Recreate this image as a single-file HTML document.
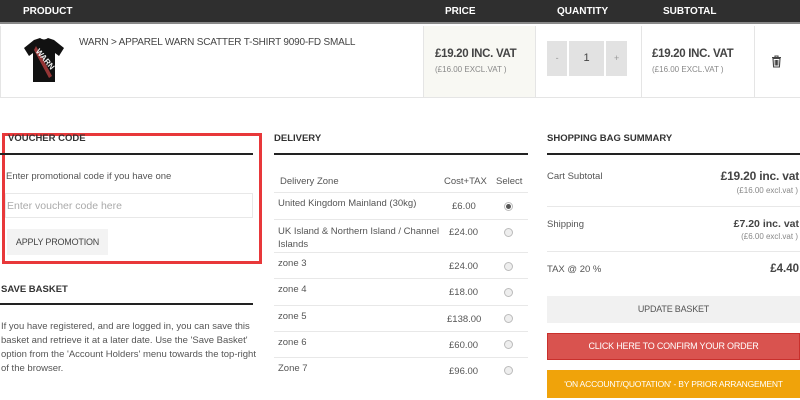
<!DOCTYPE html>
<html><head><style>
*{margin:0;padding:0;box-sizing:border-box}
body{width:800px;height:400px;overflow:hidden;background:#fff;font-family:"Liberation Sans",sans-serif;color:#555;position:relative;font-size:10px}
.a{position:absolute;white-space:nowrap}
.hd{background:#2f2f2f;position:absolute;left:0;top:0;width:800px;height:24px;border-bottom:2px solid #888}
.hd span{position:absolute;top:6px;color:#fff;font-size:10px;font-weight:bold}
.h{position:absolute;font-weight:bold;color:#333;font-size:9.5px}
.ln{position:absolute;height:2px;background:#222}
.sep{position:absolute;height:1px;background:#e8e8e8}
.r{width:9px;height:9px;border-radius:50%;border:1px solid #bbb;background:#eee;position:absolute}
.btn{position:absolute;text-align:center;font-size:9px;white-space:nowrap;letter-spacing:-0.2px}
</style></head><body>
<div class="hd"><span style="left:23px">PRODUCT</span><span style="left:445px">PRICE</span><span style="left:557px">QUANTITY</span><span style="left:663px">SUBTOTAL</span></div>
<div style="position:absolute;left:0;top:26px;width:800px;height:72px;border-bottom:1px solid #e5e5e5;border-left:1px solid #e5e5e5"></div>
<div style="position:absolute;left:423px;top:26px;width:112px;height:71px;background:#f8f8f3;border-left:1px solid #e5e5e5"></div>
<div style="position:absolute;left:535px;top:26px;width:1px;height:71px;background:#e5e5e5"></div>
<div style="position:absolute;left:641px;top:26px;width:1px;height:71px;background:#e5e5e5"></div>
<div style="position:absolute;left:754px;top:26px;width:1px;height:71px;background:#e5e5e5"></div>
<svg class="a" style="left:22px;top:36px" width="44" height="50" viewBox="0 0 44 50"><path d="M12 4 L18 2 Q22 5 26 2 L32 4 L42 12 L37 20 L33 17 L33 46 L11 46 L11 17 L7 20 L2 12 Z" fill="#111"/><path d="M14 10 L30 40 L27 42 L12 14Z" fill="#c44" opacity=".7"/><text x="13" y="20" fill="#eee" font-size="8" font-weight="bold" transform="rotate(50 18 18)">WARN</text></svg>
<div class="a" style="left:79px;top:37px;font-size:10px;color:#444;letter-spacing:-0.2px">WARN &gt; APPAREL WARN SCATTER T-SHIRT 9090-FD SMALL</div>
<div class="a" style="left:435px;top:48px;font-size:11.5px;font-weight:bold;color:#444;letter-spacing:-0.3px">£19.20 INC. VAT</div>
<div class="a" style="left:435px;top:65px;font-size:8px;color:#888">(£16.00 EXCL.VAT )</div>
<div class="btn" style="left:547px;top:41px;width:20px;height:35px;background:#e2e2e2;line-height:35px;color:#999">-</div>
<div class="btn" style="left:569px;top:41px;width:35px;height:35px;background:#e2e2e2;line-height:35px;color:#444;font-size:11px">1</div>
<div class="btn" style="left:606px;top:41px;width:21px;height:35px;background:#e2e2e2;line-height:35px;color:#999">+</div>
<div class="a" style="left:652px;top:48px;font-size:11.5px;font-weight:bold;color:#444;letter-spacing:-0.3px">£19.20 INC. VAT</div>
<div class="a" style="left:652px;top:65px;font-size:8px;color:#888">(£16.00 EXCL.VAT )</div>
<svg class="a" style="left:771px;top:55px" width="11" height="13" viewBox="0 0 11 13"><path d="M1 2.5H10M4 2.5V1H7V2.5M2 3.5L2.6 12H8.4L9 3.5Z M4.2 5V10.5M5.5 5V10.5M6.8 5V10.5" stroke="#444" stroke-width="1.1" fill="none"/></svg>

<div style="position:absolute;left:2px;top:133px;width:260px;height:131px;border:3px solid #e8383a"></div>
<div class="h a" style="left:8px;top:133px">VOUCHER CODE</div>
<div class="ln" style="left:0;top:153px;width:253px"></div>
<div class="a" style="left:6px;top:171px;font-size:9.5px">Enter promotional code if you have one</div>
<div style="position:absolute;left:5px;top:193px;width:248px;height:25px;border:1px solid #e8e8e8"></div>
<div class="a" style="left:7px;top:200px;font-size:10.5px;color:#aaa">Enter voucher code here</div>
<div class="btn" style="left:7px;top:229px;width:101px;height:26px;background:#f3f3f3;line-height:26px;color:#444">APPLY PROMOTION</div>

<div class="h a" style="left:1px;top:284px">SAVE BASKET</div>
<div class="ln" style="left:0;top:303px;width:253px"></div>
<div class="a" style="left:1px;top:320px;font-size:9.5px;line-height:14px;white-space:normal;width:260px">If you have registered, and are logged in, you can save this basket and retrieve it at a later date. Use the 'Save Basket' option from the 'Account Holders' menu towards the top-right of the browser.</div>

<div class="h a" style="left:274px;top:133px">DELIVERY</div>
<div class="ln" style="left:274px;top:153px;width:254px"></div>
<div class="a" style="left:280px;top:176px;font-size:9.5px">Delivery Zone</div>
<div class="a" style="left:444px;top:176px;font-size:9.5px">Cost+TAX</div>
<div class="a" style="left:496px;top:176px;font-size:9.5px">Select</div>
<div class="sep" style="left:274px;top:192px;width:254px"></div>
<div class="a" style="left:278px;top:198px;font-size:9.5px">United Kingdom Mainland (30kg)</div><div class="a" style="left:452px;top:201px;font-size:9.5px">£6.00</div>
<div class="r" style="left:504px;top:202px;background:#fff"><div style="width:5px;height:5px;border-radius:50%;background:#555;margin:1px"></div></div>
<div class="sep" style="left:274px;top:219px;width:254px"></div>
<div class="a" style="left:278px;top:225px;font-size:9.5px;line-height:13px">UK Island &amp; Northern Island / Channel<br>Islands</div><div class="a" style="left:449px;top:227px;font-size:9.5px">£24.00</div><div class="r" style="left:504px;top:228px"></div>
<div class="sep" style="left:274px;top:252px;width:254px"></div>
<div class="a" style="left:278px;top:258px;font-size:9.5px">zone 3</div><div class="a" style="left:449px;top:261px;font-size:9.5px">£24.00</div><div class="r" style="left:504px;top:262px"></div>
<div class="sep" style="left:274px;top:278px;width:254px"></div>
<div class="a" style="left:278px;top:284px;font-size:9.5px">zone 4</div><div class="a" style="left:449px;top:287px;font-size:9.5px">£18.00</div><div class="r" style="left:504px;top:288px"></div>
<div class="sep" style="left:274px;top:305px;width:254px"></div>
<div class="a" style="left:278px;top:311px;font-size:9.5px">zone 5</div><div class="a" style="left:447px;top:314px;font-size:9.5px">£138.00</div><div class="r" style="left:504px;top:314px"></div>
<div class="sep" style="left:274px;top:331px;width:254px"></div>
<div class="a" style="left:278px;top:337px;font-size:9.5px">zone 6</div><div class="a" style="left:449px;top:340px;font-size:9.5px">£60.00</div><div class="r" style="left:504px;top:340px"></div>
<div class="sep" style="left:274px;top:357px;width:254px"></div>
<div class="a" style="left:278px;top:363px;font-size:9.5px">Zone 7</div><div class="a" style="left:449px;top:366px;font-size:9.5px">£96.00</div><div class="r" style="left:504px;top:366px"></div>

<div class="h a" style="left:547px;top:133px">SHOPPING BAG SUMMARY</div>
<div class="ln" style="left:547px;top:153px;width:253px"></div>
<div class="a" style="left:547px;top:171px;font-size:9.5px">Cart Subtotal</div>
<div class="a" style="right:1px;top:169px;font-size:12px;font-weight:bold;color:#444;letter-spacing:-0.2px">£19.20 inc. vat</div>
<div class="a" style="right:2px;top:186px;font-size:8px;color:#888">(£16.00 excl.vat )</div>
<div class="sep" style="left:547px;top:206px;width:253px"></div>
<div class="a" style="left:547px;top:219px;font-size:9.5px">Shipping</div>
<div class="a" style="right:1px;top:218px;font-size:10.5px;font-weight:bold;color:#444">£7.20 inc. vat</div>
<div class="a" style="right:2px;top:232px;font-size:8px;color:#888">(£6.00 excl.vat )</div>
<div class="sep" style="left:547px;top:251px;width:253px"></div>
<div class="a" style="left:547px;top:264px;font-size:9.5px">TAX @ 20 %</div>
<div class="a" style="right:1px;top:263px;font-size:11.5px;font-weight:bold;color:#444">£4.40</div>
<div class="btn" style="left:547px;top:296px;width:253px;height:27px;background:#f1f1f1;line-height:27px;color:#555">UPDATE BASKET</div>
<div class="btn" style="left:547px;top:333px;width:253px;height:27px;background:#d9534f;border:1px solid #c9302c;line-height:25px;color:#fff">CLICK HERE TO CONFIRM YOUR ORDER</div>
<div class="btn" style="left:547px;top:370px;width:253px;height:28px;background:#f0a30a;line-height:28px;color:#fff;font-size:8.5px">'ON ACCOUNT/QUOTATION' - BY PRIOR ARRANGEMENT</div>
</body></html>
